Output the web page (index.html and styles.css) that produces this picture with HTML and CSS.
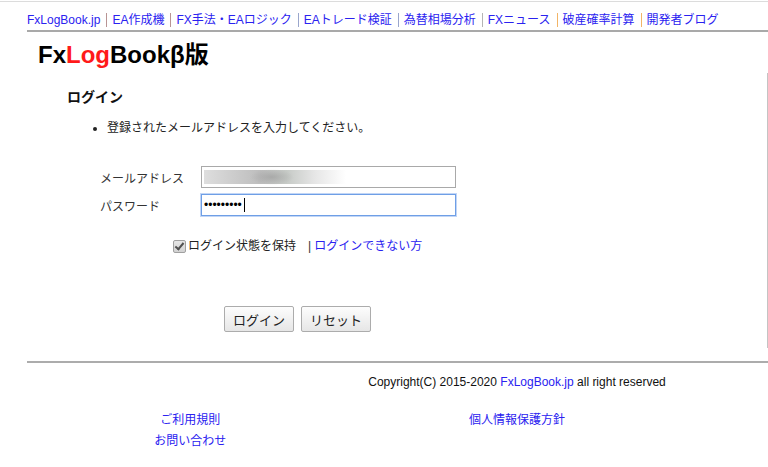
FILE: index.html
```
<!DOCTYPE html>
<html lang="ja">
<head>
    <meta charset="UTF-8">
    <meta name="viewport" content="width=device-width, initial-scale=1.0">
    <title>ログイン - FxLogBookβ版</title>
    <link rel="stylesheet" href="styles.css">
</head>
<body>
    <div class="top-line"></div>

    <div class="page">
        <ul class="site-nav">
            <li class="sep-rose"><a href="#">FxLogBook.jp</a></li>
            <li class="sep-rose"><a href="#">EA作成機</a></li>
            <li class="sep-blue"><a href="#">FX手法・EAロジック</a></li>
            <li class="sep-blue"><a href="#">EAトレード検証</a></li>
            <li class="sep-grey"><a href="#">為替相場分析</a></li>
            <li class="sep-orange"><a href="#">FXニュース</a></li>
            <li class="sep-orange"><a href="#">破産確率計算</a></li>
            <li><a href="#">開発者ブログ</a></li>
        </ul>

        <h1 class="logo">Fx<span class="logo-red">Log</span>Bookβ版</h1>

        <div class="main-box">
            <h2 class="box-title">ログイン</h2>
            <ul class="notes">
                <li>登録されたメールアドレスを入力してください。</li>
            </ul>

            <form class="login-form">
                <div class="form-row">
                    <label for="email">メールアドレス</label>
                    <input type="text" id="email" class="text-input email-blur">
                </div>
                <div class="form-row">
                    <label for="password">パスワード</label>
                    <span class="caret-wrap">
                        <input type="password" id="password" class="text-input is-focused" value="123456789">
                    </span>
                </div>

                <div class="keep-row">
                    <input type="checkbox" id="keep" class="keep-check" checked>
                    <label for="keep">ログイン状態を保持</label>
                    <span class="bar">|</span><a href="#">ログインできない方</a>
                </div>

                <div class="buttons">
                    <button type="submit">ログイン</button>
                    <button type="reset">リセット</button>
                </div>
            </form>
        </div>

        <div class="footer">
            <p class="copyright">Copyright(C) 2015-2020 <a href="#">FxLogBook.jp</a> all right reserved</p>
            <div class="footer-links">
                <a href="#">ご利用規則</a>
                <a href="#">個人情報保護方針</a>
                <span></span>
                <a href="#">お問い合わせ</a>
            </div>
        </div>
    </div>
</body>
</html>
```

FILE: styles.css
```
html, body {
    overflow-x: hidden;
}

body {
    margin: 0;
    font-family: "Liberation Sans", "Noto Sans CJK JP", sans-serif;
    font-size: 12px;
    color: #222;
}

a {
    color: #2a22f0;
    text-decoration: none;
}

.top-line {
    margin-top: 1px;
    height: 1px;
    background-color: #dcdcdc;
}

.page {
    width: 980px;
    margin-left: 27px;
}

/* global navigation */
.site-nav {
    display: flex;
    margin: 0;
    padding: 11px 0 3px;
    list-style: none;
    line-height: 14px;
    border-bottom: 2px solid #a9a9a9;
}

.site-nav li {
    padding-right: 6px;
    margin-right: 5px;
    border-right: 1px solid transparent;
}

.site-nav .sep-rose { border-right-color: #b89494; }
.site-nav .sep-blue { border-right-color: #9aa6cc; }
.site-nav .sep-grey { border-right-color: #b4b4b4; }
.site-nav .sep-orange { border-right-color: #f2b466; }

.logo {
    margin: 9px 0 0 11px;
    font-size: 24px;
    line-height: 28px;
    font-weight: bold;
    color: #000;
}

.logo-red {
    color: #ff1a1a;
}

/* login box */
.main-box {
    width: 700px;
    margin-top: 4px;
    padding: 15px 0 16px 40px;
    border-right: 1px solid #c4c4c4;
}

.box-title {
    margin: 0;
    font-size: 14px;
    line-height: 18px;
    font-weight: bold;
    color: #111;
}

.notes {
    margin: 14px 0 0;
    padding-left: 40px;
    line-height: 16px;
}

.login-form {
    margin-top: 30px;
}

.form-row {
    display: grid;
    grid-template-columns: 101px 255px;
    align-items: center;
    margin-left: 33px;
    margin-bottom: 6px;
}

.form-row label {
    color: #333;
}

.text-input {
    width: 255px;
    height: 22px;
    margin: 0;
    padding: 0 2px;
    box-sizing: border-box;
    border: 1px solid #a9a9a9;
    font-family: "Liberation Sans", sans-serif;
    font-size: 12px;
    outline: none;
}

/* smudged address that was already typed in */
.email-blur {
    background:
        radial-gradient(ellipse 22px 8px at 70px 10px, rgba(150, 150, 150, 0.55), rgba(150, 150, 150, 0) 100%),
        linear-gradient(to right, #dedede 0, #cdcdcd 20%, #bdbdbd 40%, #c6cac6 58%, #e6e6e6 78%, #fff 100%) no-repeat 2px 3px / 142px 14px,
        #fff;
}

.is-focused {
    border-color: #6f9fe6;
    box-shadow: 0 0 0 1px #c2d6f6;
}

.caret-wrap {
    position: relative;
    display: inline-block;
}

/* text cursor after the typed password */
.caret-wrap::after {
    content: "";
    position: absolute;
    left: 43px;
    top: 4px;
    width: 1px;
    height: 14px;
    background-color: #000;
}

.keep-row {
    display: flex;
    align-items: center;
    margin-top: 21px;
    padding-left: 106px;
    line-height: 18px;
}

.keep-check {
    appearance: none;
    position: relative;
    width: 13px;
    height: 13px;
    margin: 0 2px 0 0;
    border: 1px solid #a0a0a0;
    border-radius: 2px;
    background: linear-gradient(#e6e6e6, #d2d2d2);
    box-sizing: border-box;
}

/* check mark */
.keep-check:checked::after {
    content: "";
    position: absolute;
    left: 3px;
    top: 0;
    width: 3px;
    height: 7px;
    border: solid #505050;
    border-width: 0 2px 2px 0;
    transform: rotate(40deg);
}

.keep-row label {
    color: #222;
}

.keep-row .bar {
    margin-left: 12px;
    margin-right: 3px;
    color: #333;
}

.buttons {
    display: flex;
    gap: 7px;
    margin-top: 51px;
    padding-left: 157px;
}

.buttons button {
    width: 70px;
    height: 26px;
    padding: 0;
    border: 1px solid #acacac;
    border-radius: 2px;
    background: linear-gradient(#fdfdfd, #e6e6e6);
    font-family: "Liberation Sans", "Noto Sans CJK JP", sans-serif;
    font-size: 13px;
    color: #222;
}

/* footer */
.footer {
    margin-top: 13px;
    border-top: 2px solid #acacac;
}

.copyright {
    margin: 11px 0 0;
    text-align: center;
    line-height: 16px;
    color: #111;
}

.footer-links {
    display: grid;
    grid-template-columns: repeat(3, 1fr);
    row-gap: 5px;
    margin-top: 22px;
    line-height: 16px;
    text-align: center;
}
```
